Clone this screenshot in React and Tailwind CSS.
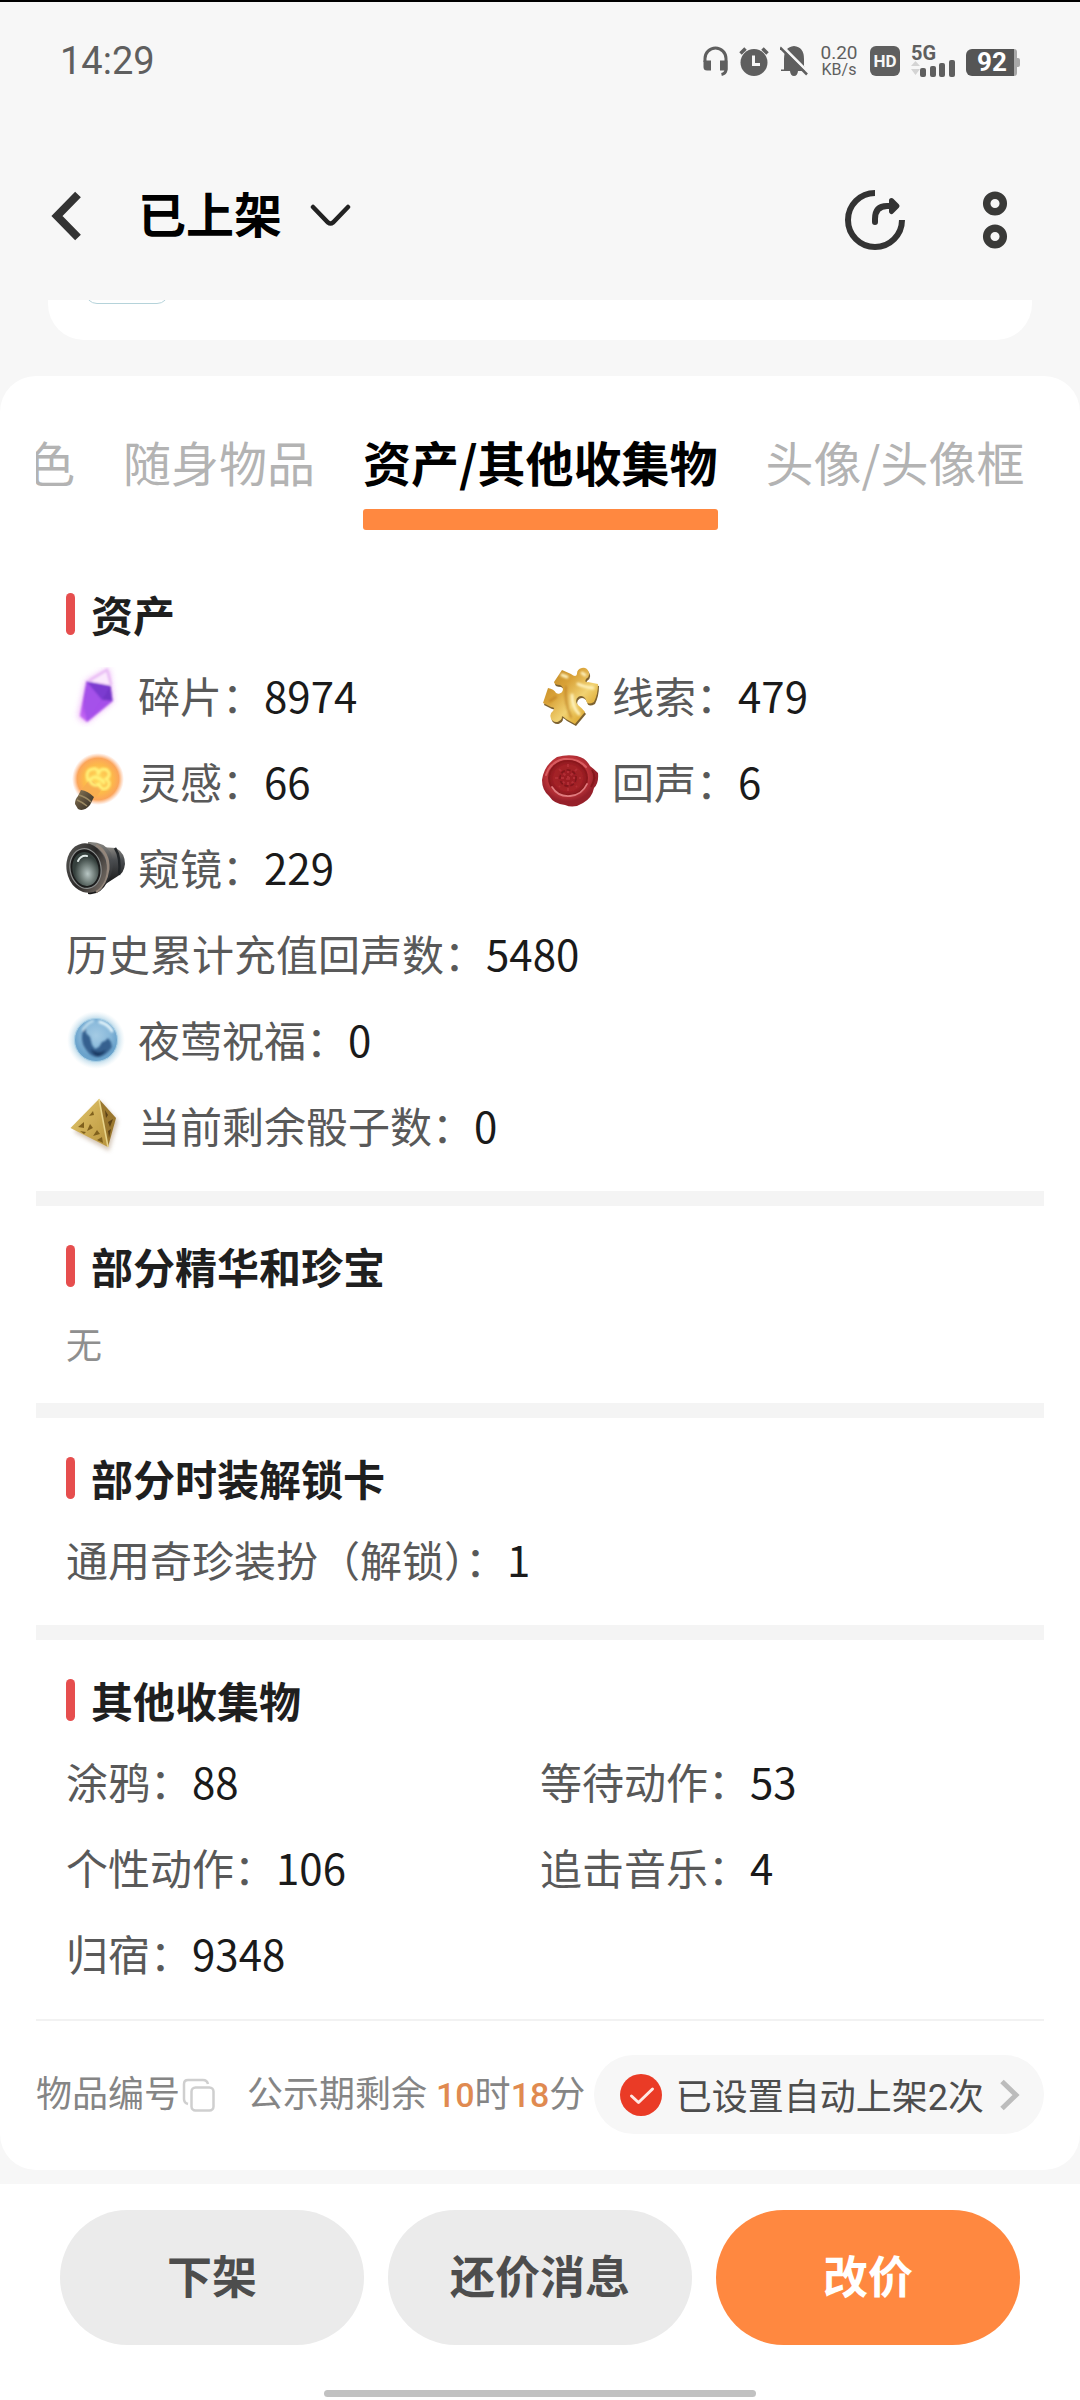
const CJK = "font-['Noto_Sans_CJK_SC',sans-serif]";
const MIXED = "font-['Roboto','Noto_Sans_CJK_SC',sans-serif]";

function HeadsetIcon() {
  return (
    <svg width="25" height="30" viewBox="0 0 25 30" fill="none" aria-hidden="true">
      <path d="M2 16V12.500A10.500 10.500 0 0 1 23 12.500V23Q23 27.500 18.500 28.500" stroke="#5f5f5f" strokeWidth="3" />
      <path d="M.5 14.500H8V24.500H4Q.5 24.500 .5 21Z" fill="#5f5f5f" />
      <path d="M24.500 14.500H17V24.500H24.500Z" fill="#5f5f5f" />
    </svg>
  );
}

function AlarmIcon() {
  return (
    <svg width="30" height="30" viewBox="0 0 30 30" fill="none" aria-hidden="true">
      <circle cx="15" cy="16.500" r="13.500" fill="#5f5f5f" />
      <path d="M1.500 7.500L6.500 2.500M28.500 7.500L23.500 2.500" stroke="#5f5f5f" strokeWidth="3.500" />
      <path d="M14.500 9.500V18.500H21" stroke="#f7f7f7" strokeWidth="3" />
    </svg>
  );
}

function BellOffIcon() {
  return (
    <svg width="28" height="30" viewBox="0 0 28 30" fill="none" aria-hidden="true">
      <path d="M4 23.500V13Q4 1 14 0Q24 1 24 13V20L26 24V25H18Q17.500 30 14 30Q10.500 30 10 25H1V23.500Z" fill="#5f5f5f" />
      <path d="M2 0L28 26" stroke="#f7f7f7" strokeWidth="3" />
      <path d="M0 1.500L27 28.500" stroke="#5f5f5f" strokeWidth="2.500" />
    </svg>
  );
}

function SignalIcon() {
  return (
    <svg width="44" height="17" viewBox="0 0 44 17" aria-hidden="true">
      <path d="M0 6L4.500 1L9 6Z M0 9L4.500 15L9 9Z" fill="#d4d4d4" />
      <rect x="9" y="8" width="6" height="9" rx="2" fill="#5f5f5f" />
      <rect x="19" y="6" width="6" height="11" rx="2" fill="#5f5f5f" />
      <rect x="28" y="3" width="6" height="14" rx="2" fill="#5f5f5f" />
      <rect x="38" y="0" width="6" height="17" rx="2" fill="#5f5f5f" />
    </svg>
  );
}

function StatusBar() {
  return (
    <div className={`flex h-[118px] items-center justify-between px-[60px] text-[#5f5f5f] ${MIXED}`}>
      <span className="text-[38px] leading-[40px]">14:29</span>
      <div className="flex items-center gap-[11px]">
        <HeadsetIcon />
        <AlarmIcon />
        <BellOffIcon />
        <div className="flex w-[40px] flex-col items-center">
          <span className="text-[19px] leading-[17px]">0.20</span>
          <span className="text-[16px] leading-[17px]">KB/s</span>
        </div>
        <span className="flex h-[30px] w-[30px] items-center justify-center rounded-[6px] bg-[#5f5f5f] text-[17px] font-bold leading-none text-[#f7f7f7]">
          HD
        </span>
        <div className="flex w-[44px] flex-col">
          <span className="text-[20px] font-bold leading-[14px]">5G</span>
          <SignalIcon />
        </div>
        <div className="flex items-center pt-[2px]">
          <span className="flex h-[27px] w-[48px] items-center justify-center rounded-l-[6px] bg-[#555] pl-[4px] text-[26px] font-bold leading-none text-white">
            92
          </span>
          <span className="h-[27px] w-[3px] rounded-r-[3px] bg-[#a8a8a8]" />
          <span className="h-[9px] w-[3px] rounded-r-[2px] bg-[#a8a8a8]" />
        </div>
      </div>
    </div>
  );
}

function NavBar() {
  return (
    <div className="mt-[12px] flex h-[168px] items-center pl-[50px] pr-[72px]">
      <button type="button" aria-label="返回" className="mr-[56px]">
        <svg width="32" height="50" viewBox="0 0 32 50" fill="none">
          <path d="M28 3.500L7 25L28 46.500" stroke="#333" strokeWidth="8" />
        </svg>
      </button>
      <button type="button" className="flex items-center gap-7">
        <h1 className="pb-2 text-[48px] font-bold leading-[60px] text-black">已上架</h1>
        <svg width="41" height="24" viewBox="0 0 41 24" fill="none" aria-hidden="true">
          <path d="M3 3L18 18.500Q20.500 20.500 23 18.500L38 3" stroke="#222" strokeWidth="4.500" strokeLinecap="round" />
        </svg>
      </button>
      <div className="ml-auto flex items-center gap-[76px] pt-2">
        <button type="button" aria-label="分享">
          <svg width="62" height="62" viewBox="0 0 62 62" fill="none">
            <path d="M31 4A27 27 0 1 0 58 31" stroke="#333" strokeWidth="6" />
            <path d="M31 33V30Q31 17 43 17H46" stroke="#333" strokeWidth="6" strokeLinecap="round" />
            <path d="M47.500 11.500L53 17L47.500 22.500Z" fill="#333" stroke="#333" strokeWidth="5" strokeLinejoin="round" />
          </svg>
        </button>
        <button type="button" aria-label="更多">
          <svg width="26" height="60" viewBox="0 0 26 60" fill="none">
            <circle cx="13" cy="13.500" r="8.300" stroke="#3a3a38" strokeWidth="7.500" />
            <circle cx="13" cy="46.500" r="8.300" stroke="#3a3a38" strokeWidth="7.500" />
          </svg>
        </button>
      </div>
    </div>
  );
}

function CrystalIcon() {
  return (
    <svg width="60" height="60" viewBox="0 0 60 60" aria-hidden="true">
      <defs>
        <linearGradient id="crystal" x1="0.800" y1="0" x2="0.200" y2="1">
          <stop offset="0" stopColor="#7a3acb" />
          <stop offset="0.500" stopColor="#9a3fe0" />
          <stop offset="1" stopColor="#c568f5" />
        </linearGradient>
        <filter id="crystalGlow" x="-50%" y="-50%" width="200%" height="200%">
          <feGaussianBlur stdDeviation="3" />
        </filter>
        <filter id="crystalSoft">
          <feGaussianBlur stdDeviation="0.800" />
        </filter>
      </defs>
      <path d="M20 14L43 1L47 34L20 56L12 50Z" fill="#e9a0f5" opacity="0.800" filter="url(#crystalGlow)" />
      <g filter="url(#crystalSoft)">
        <path d="M23 14L41 3L45 18" fill="#fbeafd" stroke="#e8bdf4" strokeWidth="2.500" />
        <path d="M20.500 14.500L44.500 19L46.500 34L21 55L14 49Z" fill="url(#crystal)" />
        <path d="M20.500 14.500L44.500 19L36 33Z" fill="#7b3bd0" />
        <path d="M44.500 19L46.500 34L36 33Z" fill="#7236c6" />
        <path d="M20.500 14.500L36 33L21 55L18 40Z" fill="#a551ea" />
        <path d="M36 33L46.500 34L21 55Z" fill="#a650ea" />
      </g>
    </svg>
  );
}

function BulbIcon() {
  return (
    <svg width="60" height="60" viewBox="0 0 60 60" aria-hidden="true">
      <defs>
        <radialGradient id="bulb">
          <stop offset="0" stopColor="#ffd95a" />
          <stop offset="0.550" stopColor="#fdb94a" />
          <stop offset="0.800" stopColor="#fba55a" />
          <stop offset="1" stopColor="#fdb38a" stopOpacity="0" />
        </radialGradient>
        <linearGradient id="bulbBase" x1="0" y1="0" x2="1" y2="1">
          <stop offset="0" stopColor="#8b7a58" />
          <stop offset="0.500" stopColor="#5b4e3a" />
          <stop offset="1" stopColor="#2e2a22" />
        </linearGradient>
        <filter id="bulbSoft">
          <feGaussianBlur stdDeviation="0.800" />
        </filter>
      </defs>
      <circle cx="32" cy="26" r="26" fill="url(#bulb)" />
      <path d="M16 36L30 44L36 36L24 26Z" fill="#f8ae50" />
      <path d="M22 27Q19 17 27 16Q33 15 32 22Q34 14 41 17Q46 22 40 26Q46 30 41 35Q35 38 33 31Q29 34 25 30Q23 24 30 24Q36 26 38 30" fill="none" stroke="#fff27a" strokeWidth="3" strokeLinecap="round" filter="url(#bulbSoft)" />
      <path d="M15 37Q22 38 28 44L24 52Q18 59 12 56L9 51Q9 46 12 43Z" fill="url(#bulbBase)" />
      <path d="M13 42Q20 44 25 49M11 47Q16 49 21 53" fill="none" stroke="#9c8a64" strokeWidth="1.500" />
    </svg>
  );
}

function ScopeIcon() {
  return (
    <svg width="60" height="60" viewBox="0 0 60 60" aria-hidden="true">
      <defs>
        <linearGradient id="barrel" x1="0" y1="0" x2="0" y2="1">
          <stop offset="0" stopColor="#8a8883" />
          <stop offset="0.350" stopColor="#4a4d50" />
          <stop offset="1" stopColor="#161616" />
        </linearGradient>
        <linearGradient id="ring" x1="0" y1="0" x2="1" y2="1">
          <stop offset="0" stopColor="#5e5d5a" />
          <stop offset="0.500" stopColor="#2b2a29" />
          <stop offset="1" stopColor="#8a7f76" />
        </linearGradient>
        <radialGradient id="lens" cx="0.550" cy="0.650">
          <stop offset="0" stopColor="#b8c6c4" />
          <stop offset="0.500" stopColor="#76837f" />
          <stop offset="1" stopColor="#35403d" />
        </radialGradient>
      </defs>
      <path d="M34 8L50 9Q59 14 59 25Q58 34 52 37L38 46Z" fill="url(#barrel)" />
      <path d="M49 9Q55 18 53 36" fill="none" stroke="#222629" strokeWidth="2.500" />
      <path d="M22 3Q38 2 45 14Q50 28 42 42Q34 57 22 55Z" fill="url(#barrel)" />
      <path d="M30 6Q43 14 42 30Q40 45 30 53" fill="none" stroke="#93867b" strokeWidth="3" />
      <ellipse cx="20.500" cy="29" rx="20" ry="25" transform="rotate(-10 20.500 29)" fill="url(#ring)" />
      <ellipse cx="19.500" cy="29.500" rx="15.500" ry="20" transform="rotate(-10 19.500 29.500)" fill="#1b1c1c" stroke="#8b8d8c" strokeWidth="1.200" />
      <ellipse cx="19.500" cy="30" rx="13" ry="17" transform="rotate(-10 19.500 30)" fill="url(#lens)" />
      <path d="M12 22Q15 16 21 17" fill="none" stroke="#dfe8e6" strokeWidth="2" strokeLinecap="round" />
    </svg>
  );
}

function PuzzleIcon() {
  const outline =
    "M22 3L31 7Q36 11 37 7A6 6 0 1 1 46 12Q44 16 48 15L58 17Q58 27 54 35Q47 39 46 33A5 5 0 1 0 38 38Q42 41 45 45L35 57L26 52Q21 47 22 51A6 6 0 1 1 13 44Q16 40 11 40L3 36L8 21Q14 22 16 26A4.500 4.500 0 1 0 20 18Q14 18 14 15Z";
  return (
    <svg width="60" height="60" viewBox="0 0 60 60" aria-hidden="true">
      <defs>
        <linearGradient id="puzzle" x1="0" y1="0" x2="1" y2="1">
          <stop offset="0" stopColor="#b9811f" />
          <stop offset="0.350" stopColor="#d9a238" />
          <stop offset="0.600" stopColor="#f1d272" />
          <stop offset="0.800" stopColor="#dfac36" />
          <stop offset="1" stopColor="#b98018" />
        </linearGradient>
        <filter id="puzzleSoft">
          <feGaussianBlur stdDeviation="1" />
        </filter>
      </defs>
      <path d={outline} fill="#7d6230" transform="translate(1 2)" />
      <path d={outline} fill="url(#puzzle)" />
      <g fill="none" strokeLinecap="round" filter="url(#puzzleSoft)">
        <path d="M26 20Q24 34 31 50M10 34L16 30" stroke="#b87722" strokeWidth="2.500" opacity="0.600" />
        <path d="M38 17Q44 20 53 21M32 28Q32 40 39 47M22 8L27 10M42 6L45 8" stroke="#fff3bd" strokeWidth="3" />
      </g>
    </svg>
  );
}

function SealIcon() {
  return (
    <svg width="60" height="60" viewBox="0 0 60 60" aria-hidden="true">
      <defs>
        <radialGradient id="wax" cx="0.450" cy="0.400">
          <stop offset="0" stopColor="#c23338" />
          <stop offset="0.750" stopColor="#b93238" />
          <stop offset="1" stopColor="#96202a" />
        </radialGradient>
        <radialGradient id="stamp">
          <stop offset="0" stopColor="#981d23" />
          <stop offset="0.700" stopColor="#a42127" />
          <stop offset="1" stopColor="#86161b" />
        </radialGradient>
        <filter id="sealSoft">
          <feGaussianBlur stdDeviation="0.700" />
        </filter>
      </defs>
      <path d="M17 4Q27 1 37 3Q46 5 50 13Q54 16 58 20Q59 30 54 35Q52 45 43 50Q34 56 25 52Q14 51 9 43Q2 37 2 27Q4 12 17 4Z" fill="url(#wax)" />
      <g filter="url(#sealSoft)">
        <path d="M6 22Q10 9 24 6Q38 5 46 14" fill="none" stroke="#d95c60" strokeWidth="2" strokeLinecap="round" />
        <ellipse cx="28" cy="25" rx="20" ry="18" fill="url(#stamp)" />
        <path d="M12 34Q18 44 30 43Q42 42 47 31" fill="none" stroke="#e07a7d" strokeWidth="1.800" strokeLinecap="round" />
        <path d="M28 11V39M15 25H41M19 16L37 34M37 16L19 34" stroke="#b22f35" strokeWidth="2" strokeDasharray="3 3" />
        <circle cx="28" cy="25" r="8" fill="none" stroke="#7f151a" strokeWidth="1.500" strokeDasharray="4 2" />
        <path d="M52 17Q57 24 51 34" fill="none" stroke="#86161b" strokeWidth="2" />
      </g>
    </svg>
  );
}

function OrbIcon() {
  return (
    <svg width="60" height="60" viewBox="0 0 60 60" aria-hidden="true">
      <defs>
        <radialGradient id="orbGlow">
          <stop offset="0.650" stopColor="#8fc0dc" stopOpacity="0.900" />
          <stop offset="1" stopColor="#cfe6f0" stopOpacity="0" />
        </radialGradient>
        <radialGradient id="orb" cx="0.500" cy="0.400">
          <stop offset="0" stopColor="#a4cbe4" />
          <stop offset="0.600" stopColor="#8bbadb" />
          <stop offset="1" stopColor="#6ba3cc" />
        </radialGradient>
        <filter id="orbSoft">
          <feGaussianBlur stdDeviation="0.800" />
        </filter>
      </defs>
      <circle cx="30" cy="29" r="29" fill="url(#orbGlow)" />
      <circle cx="30" cy="29" r="21.500" fill="url(#orb)" stroke="#a9d0e6" strokeWidth="1" />
      <g filter="url(#orbSoft)">
        <path d="M19 13L20 22L24 26L26 34L29 38L33 36L36 31L39 30L42 27L45 31L46 36Q41 44 33 46Q25 46 21 40Q15 33 16 24Z" fill="#35608f" />
        <path d="M25 38Q31 44 40 39Q36 46 30 45Q26 43 25 38Z" fill="#1b3a64" />
        <path d="M34 11Q42 13 46 20" fill="none" stroke="#e3f4fb" strokeWidth="3" strokeLinecap="round" />
        <path d="M17 19Q20 13 27 10" fill="none" stroke="#c8e4f2" strokeWidth="2" strokeLinecap="round" />
      </g>
    </svg>
  );
}

function DieIcon() {
  return (
    <svg width="60" height="60" viewBox="0 0 60 60" aria-hidden="true">
      <defs>
        <linearGradient id="dieFace" x1="0" y1="0" x2="1" y2="1">
          <stop offset="0" stopColor="#e0c76e" />
          <stop offset="0.500" stopColor="#cfae55" />
          <stop offset="1" stopColor="#b8943e" />
        </linearGradient>
        <filter id="dieShadow" x="-50%" y="-50%" width="200%" height="200%">
          <feGaussianBlur stdDeviation="2" />
        </filter>
        <filter id="dieSoft">
          <feGaussianBlur stdDeviation="0.600" />
        </filter>
      </defs>
      <path d="M34 4L52 24L43 54L8 35Z" fill="#c9b7a4" filter="url(#dieShadow)" opacity="0.800" />
      <g filter="url(#dieSoft)">
        <path d="M33 2L42 50L4.500 31Z" fill="url(#dieFace)" />
        <path d="M33 2L50 21L42 50Z" fill="#9a772e" />
        <path d="M33 2L42 50" stroke="#e8d48a" strokeWidth="1.500" />
        <path d="M27 14L23 19L28 18ZM18 25L12 30L18 31ZM24 27L21 34L27 31ZM31 33L27 39L34 37ZM36 40L31 43L37 46ZM14 34L18 37L20 35Z" fill="#80611f" />
        <path d="M39 13L42 18L40 21ZM42 25L47 22L44 30ZM42 34L45 32L43 41Z" fill="#5c4216" />
      </g>
    </svg>
  );
}

function SectionTitle({ children }) {
  return (
    <h2 className="flex items-center gap-4 text-[42px] font-bold leading-[42px] text-[#1f1f1f]">
      <span className="h-[42px] w-[9px] rounded-full bg-[#e64e4e]" />
      {children}
    </h2>
  );
}

function Section({ title, children }) {
  return (
    <section className="px-[30px] pb-[22px] pt-[39px]">
      <SectionTitle>{title}</SectionTitle>
      <div className="mt-[18px]">{children}</div>
    </section>
  );
}

function Item({ icon: Icon, label, value, wide }) {
  return (
    <div className={wide ? "col-span-2 flex h-[86px] items-center" : "flex h-[86px] items-center"}>
      {Icon && (
        <span className="mr-3 pt-[2px]">
          <Icon />
        </span>
      )}
      <dt className="pb-[2px] text-[42px] leading-[60px] text-[#595959]">{label}：</dt>
      <dd className="pb-[2px] text-[42px] leading-[60px] text-[#1a1a1a]">{value}</dd>
    </div>
  );
}

function Divider() {
  return <div className="h-[15px] bg-[#f4f4f4]" />;
}

const tabs = ["色", "随身物品", "资产/其他收集物", "头像/头像框"];

const assets = [
  { icon: CrystalIcon, label: "碎片", value: "8974" },
  { icon: PuzzleIcon, label: "线索", value: "479" },
  { icon: BulbIcon, label: "灵感", value: "66" },
  { icon: SealIcon, label: "回声", value: "6" },
  { icon: ScopeIcon, label: "窥镜", value: "229", wide: true },
  { label: "历史累计充值回声数", value: "5480", wide: true },
  { icon: OrbIcon, label: "夜莺祝福", value: "0", wide: true },
  { icon: DieIcon, label: "当前剩余骰子数", value: "0", wide: true },
];

const collectibles = [
  { label: "涂鸦", value: "88" },
  { label: "等待动作", value: "53" },
  { label: "个性动作", value: "106" },
  { label: "追击音乐", value: "4" },
  { label: "归宿", value: "9348" },
];

function Tabs() {
  return (
    <div className="overflow-hidden pt-[55px]">
      <div role="tablist" className="-ml-[9px] flex gap-12 text-[48px] leading-[60px]">
        {tabs.map((tab) => {
          const active = tab === "资产/其他收集物";
          return (
            <button
              key={tab}
              type="button"
              role="tab"
              aria-selected={active}
              className={
                active
                  ? "shrink-0 whitespace-nowrap font-bold text-black"
                  : "flex shrink-0 whitespace-nowrap text-[#b3b3b3]"
              }
            >
              {tab}
              {active && <span className="mt-[18px] block h-[21px] rounded-[3px] bg-[#ff8840]" />}
            </button>
          );
        })}
      </div>
    </div>
  );
}

function ListingInfo() {
  return (
    <div className={`flex items-center border-t-2 border-[#f2f2f2] pb-[36px] pt-[34px] text-[36px] leading-[48px] text-[#858585] ${MIXED}`}>
      <button type="button" className="flex items-center gap-[2px] whitespace-nowrap">
        物品编号
        <svg width="33" height="34" viewBox="0 0 33 34" fill="none" aria-hidden="true">
          <rect x="9.500" y="9.500" width="22" height="23" rx="4" stroke="#cfcfcf" strokeWidth="2.500" />
          <path d="M6 26Q2 25 2 21V6Q2 2 6 2H21Q25 2 26 6" stroke="#cfcfcf" strokeWidth="2.500" />
        </svg>
      </button>
      <p className="ml-8 whitespace-nowrap">
        公示期剩余 <span className="text-[34px] font-medium text-[#e08a50]">10</span>时
        <span className="text-[34px] font-medium text-[#e08a50]">18</span>分
      </p>
      <button type="button" className="ml-auto flex h-[79px] items-center gap-[14px] whitespace-nowrap rounded-full bg-[#f7f7f7] pl-[26px] pr-[24px] text-[#4d4d4d]">
        <svg width="42" height="42" viewBox="0 0 42 42" fill="none" aria-hidden="true">
          <circle cx="21" cy="21" r="21" fill="#ea3b26" />
          <path d="M11.500 22L18.500 28.500L32.500 15" stroke="#ffe9e4" strokeWidth="3" strokeLinecap="round" strokeLinejoin="round" />
        </svg>
        <span className="pt-[6px]">已设置自动上架2次</span>
        <svg width="22" height="32" viewBox="0 0 22 32" fill="none" aria-hidden="true">
          <path d="M4 2.500L18 16L4 29.500" stroke="#bcbcbc" strokeWidth="5" />
        </svg>
      </button>
    </div>
  );
}

function ActionBar() {
  const base = "h-[135px] rounded-full pb-[5px] text-[45px] font-bold leading-[60px]";
  return (
    <footer className="flex grow flex-col bg-white px-[60px] pt-[26px]">
      <div className="grid grid-cols-3 gap-6">
        <button type="button" className={`${base} bg-[#ebebeb] text-[#4d4d4d]`}>下架</button>
        <button type="button" className={`${base} bg-[#ebebeb] text-[#4d4d4d]`}>还价消息</button>
        <button type="button" className={`${base} bg-[#ff8840] text-white`}>改价</button>
      </div>
      <div className="mx-auto mt-[45px] h-[7px] w-[45%] rounded-full bg-[#c1c1c1]" />
    </footer>
  );
}

export default function App() {
  return (
    <div lang="zh-CN" className={`flex min-h-screen flex-col border-t-2 border-black bg-[#f7f7f7] ${CJK}`}>
      <header>
        <StatusBar />
        <NavBar />
      </header>
      <div className="mx-12 h-[40px] overflow-hidden rounded-b-[36px] bg-white">
        <div className="-mt-[36px] ml-[37px] h-[40px] w-[84px] rounded-[12px] border border-[#b5d3da]" />
      </div>
      <main className="mb-[14px] mt-[36px] rounded-[36px] bg-white px-9">
        <Tabs />
        <div className="pt-[24px]">
          <Section title="资产">
            <dl className="grid grid-cols-2">
              {assets.map((item) => (
                <Item key={item.label} {...item} />
              ))}
            </dl>
          </Section>
          <Divider />
          <Section title="部分精华和珍宝">
            <p className="flex h-[76px] items-center text-[36px] leading-[48px] text-[#8f8f8f]">无</p>
          </Section>
          <Divider />
          <Section title="部分时装解锁卡">
            <dl>
              <Item label="通用奇珍装扮（解锁）" value="1" />
            </dl>
          </Section>
          <Divider />
          <Section title="其他收集物">
            <dl className="grid grid-cols-2">
              {collectibles.map((item) => (
                <Item key={item.label} {...item} />
              ))}
            </dl>
          </Section>
        </div>
        <ListingInfo />
      </main>
      <ActionBar />
    </div>
  );
}
